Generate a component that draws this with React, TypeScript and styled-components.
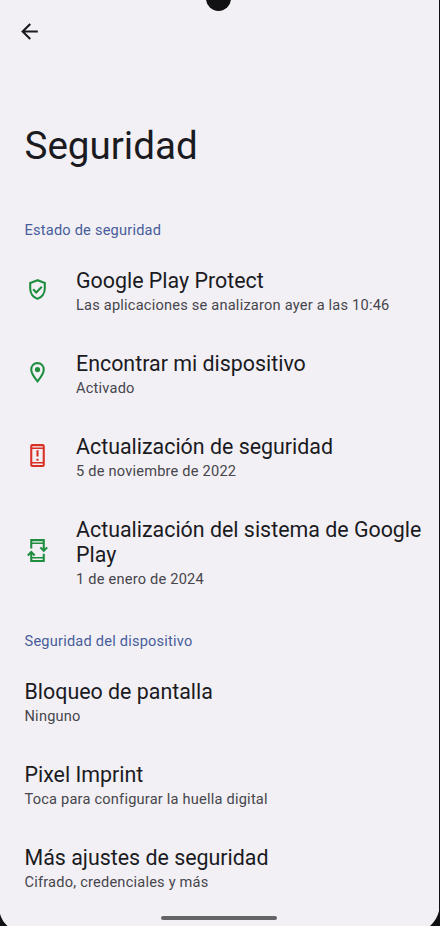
import React from 'react';
import styled, { createGlobalStyle } from 'styled-components';

const Global = createGlobalStyle`
  * { box-sizing: border-box; }
  body { margin: 0; background: #f2f0f5; font-family: Roboto, sans-serif; }
`;
const Screen = styled.main`
  position: relative;
  width: 440px;
  height: 926px;
  overflow: hidden;
  background: #f2f0f5;
  color: #1b1b1f;
  border-right: 1px solid #101012;
`;
const Camera = styled.div`
  position: absolute;
  left: 206px;
  top: -14px;
  width: 25px;
  height: 25px;
  border-radius: 50%;
  background: #121214;
`;
const TopBar = styled.header`
  height: 64px;
  padding: 19px 0 0 16.5px;
`;
const BackButton = styled.button`
  display: block;
  width: 25px;
  height: 25px;
  padding: 0;
  border: 0;
  background: none;
  color: #1b1b1f;
  svg { display: block; }
`;
const Title = styled.h1`
  margin: 0;
  height: 135px;
  padding: 56px 0 0 24.5px;
  font-size: 38.6px;
  line-height: 52px;
  font-weight: 400;
`;
const Section = styled.h2`
  margin: 0;
  height: 54px;
  padding: 22px 0 0 24.5px;
  font-size: 14.6px;
  line-height: 18px;
  letter-spacing: 0.21px;
  font-weight: 400;
  color: #485d9b;
`;
const Row = styled.div<{ $tall?: boolean }>`
  display: flex;
  height: ${p => (p.$tall ? 108 : 83)}px;
  padding: 15px 10px 0 24.5px;
`;
const IconSlot = styled.div<{ $tall?: boolean; $color: string }>`
  flex: 0 0 51.5px;
  padding-top: ${p => (p.$tall ? 21 : 9)}px;
  color: ${p => p.$color};
  svg { display: block; overflow: visible; }
`;
const Name = styled.div`
  font-size: 21.4px;
  line-height: 25px;
`;
const Note = styled.div`
  font-size: 14.6px;
  line-height: 24px;
  letter-spacing: 0.21px;
  color: #46464c;
`;
const HomeBar = styled.div`
  position: absolute;
  left: 161px;
  top: 916px;
  width: 116px;
  height: 4px;
  border-radius: 2px;
  background: #646366;
`;
const Corner = styled.svg<{ $right?: boolean }>`
  position: absolute;
  bottom: 0;
  ${p => (p.$right ? 'right: 0;' : 'left: 0;')}
  fill: #101012;
`;

const svgProps = { width: 25, height: 25, viewBox: '0 0 24 24', fill: 'none', stroke: 'currentColor', strokeWidth: 2 };

const BackIcon = () => (
  <svg {...svgProps} fill="currentColor" stroke="none">
    <path d="M20 11H7.830l5.590-5.590L12 4l-8 8 8 8 1.410-1.410L7.830 13H20z" />
  </svg>
);
const ShieldIcon = () => (
  <svg {...svgProps}>
    <path d="M12 3.100 5 5.700v5.400c0 4.700 3 8.600 7 9.900 4-1.300 7-5.200 7-9.900V5.700z" />
    <path d="m7.800 11.800 3 3 5.300-5.400" />
  </svg>
);
const PinIcon = () => (
  <svg {...svgProps}>
    <path d="M12 20.500c-3.200-3.900-6-7.600-6-11.200C6 5.600 8.500 3 12 3s6 2.600 6 6.300c0 3.600-2.800 7.300-6 11.200z" />
    <circle cx="12" cy="9.200" r="2.500" fill="currentColor" stroke="none" />
  </svg>
);
const PhoneAlertIcon = () => (
  <svg {...svgProps}>
    <rect x="6" y="2" width="12" height="20" rx="1" />
    <path d="M6 5h12M6 19h12" strokeWidth="1.300" />
    <path d="M12 7v6M12 15v2" />
  </svg>
);
const PhoneSyncIcon = () => (
  <svg {...svgProps}>
    <path d="M6 10V2h12v9M18 15v7H6v-8" />
    <path d="M6 5h12M6 19h12" strokeWidth="1.300" />
    <path d="m14.700 9 3.300 3.300L21.300 9M2.700 16.800 6 13.500l3.300 3.300" />
  </svg>
);

const green = '#1e8e3e';
const red = '#d93025';

const statusRows = [
  { name: 'Google Play Protect', note: 'Las aplicaciones se analizaron ayer a las 10:46', color: green, icon: <ShieldIcon /> },
  { name: 'Encontrar mi dispositivo', note: 'Activado', color: green, icon: <PinIcon /> },
  { name: 'Actualización de seguridad', note: '5 de noviembre de 2022', color: red, icon: <PhoneAlertIcon /> },
  { name: 'Actualización del sistema de Google Play', note: '1 de enero de 2024', color: green, icon: <PhoneSyncIcon />, tall: true },
];
const deviceRows = [
  { name: 'Bloqueo de pantalla', note: 'Ninguno' },
  { name: 'Pixel Imprint', note: 'Toca para configurar la huella digital' },
  { name: 'Más ajustes de seguridad', note: 'Cifrado, credenciales y más' },
];

export default function App() {
  return (
    <>
      <Global />
      <Screen>
        <TopBar>
          <BackButton aria-label="Atrás"><BackIcon /></BackButton>
        </TopBar>
        <Title>Seguridad</Title>
        <Section>Estado de seguridad</Section>
        {statusRows.map(r => (
          <Row key={r.name} $tall={r.tall}>
            <IconSlot $color={r.color} $tall={r.tall}>{r.icon}</IconSlot>
            <div>
              <Name>{r.name}</Name>
              <Note>{r.note}</Note>
            </div>
          </Row>
        ))}
        <Section>Seguridad del dispositivo</Section>
        {deviceRows.map(r => (
          <Row key={r.name}>
            <div>
              <Name>{r.name}</Name>
              <Note>{r.note}</Note>
            </div>
          </Row>
        ))}
        <Camera />
        <HomeBar />
        <Corner width="8" height="12" viewBox="0 0 8 12"><path d="M0 0Q2 7 7.500 12H0z" /></Corner>
        <Corner $right width="9" height="15" viewBox="0 0 9 15"><path d="M9 0Q7 8.500 0 15H9z" /></Corner>
      </Screen>
    </>
  );
}
